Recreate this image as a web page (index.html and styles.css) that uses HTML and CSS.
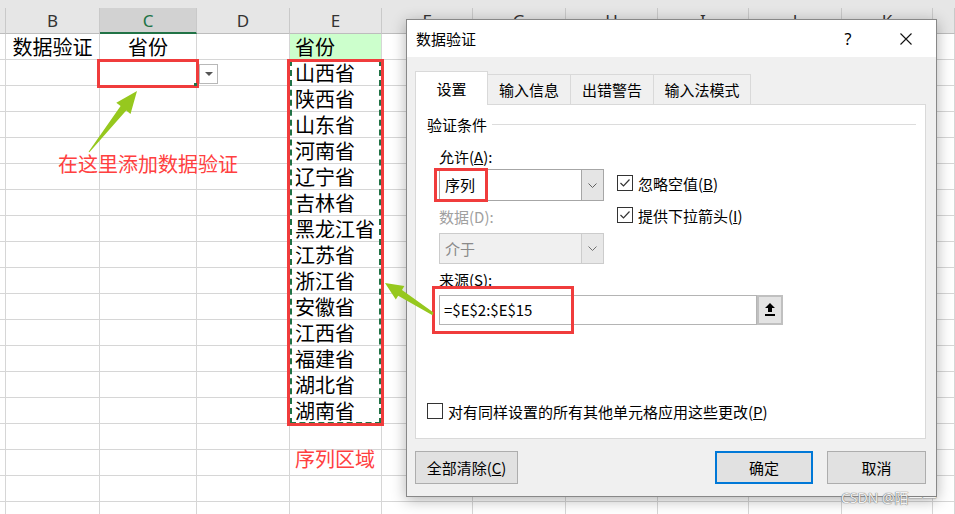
FILE: index.html
```html
<!DOCTYPE html>
<html lang="zh-CN">
<head>
    <meta charset="UTF-8">
    <title>数据验证</title>
    <link rel="stylesheet" href="styles.css">
</head>
<body>
    <div class="sheet">
        <div class="topbar"></div>
        <div class="row head"><span></span><span>B</span><span class="sel">C</span><span>D</span><span>E</span><span>F</span><span>G</span><span>H</span><span>I</span><span>J</span><span>K</span><span></span></div>
        <div class="row"><span></span><span class="c">数据验证</span><span class="c">省份</span><span></span><span class="e hl">省份</span><span></span><span></span><span></span><span></span><span></span><span></span><span></span></div>
        <div class="row"><span></span><span></span><span></span><span></span><span class="e">山西省</span><span></span><span></span><span></span><span></span><span></span><span></span><span></span></div>
        <div class="row"><span></span><span></span><span></span><span></span><span class="e">陕西省</span><span></span><span></span><span></span><span></span><span></span><span></span><span></span></div>
        <div class="row"><span></span><span></span><span></span><span></span><span class="e">山东省</span><span></span><span></span><span></span><span></span><span></span><span></span><span></span></div>
        <div class="row"><span></span><span></span><span></span><span></span><span class="e">河南省</span><span></span><span></span><span></span><span></span><span></span><span></span><span></span></div>
        <div class="row"><span></span><span></span><span></span><span></span><span class="e">辽宁省</span><span></span><span></span><span></span><span></span><span></span><span></span><span></span></div>
        <div class="row"><span></span><span></span><span></span><span></span><span class="e">吉林省</span><span></span><span></span><span></span><span></span><span></span><span></span><span></span></div>
        <div class="row"><span></span><span></span><span></span><span></span><span class="e">黑龙江省</span><span></span><span></span><span></span><span></span><span></span><span></span><span></span></div>
        <div class="row"><span></span><span></span><span></span><span></span><span class="e">江苏省</span><span></span><span></span><span></span><span></span><span></span><span></span><span></span></div>
        <div class="row"><span></span><span></span><span></span><span></span><span class="e">浙江省</span><span></span><span></span><span></span><span></span><span></span><span></span><span></span></div>
        <div class="row"><span></span><span></span><span></span><span></span><span class="e">安徽省</span><span></span><span></span><span></span><span></span><span></span><span></span><span></span></div>
        <div class="row"><span></span><span></span><span></span><span></span><span class="e">江西省</span><span></span><span></span><span></span><span></span><span></span><span></span><span></span></div>
        <div class="row"><span></span><span></span><span></span><span></span><span class="e">福建省</span><span></span><span></span><span></span><span></span><span></span><span></span><span></span></div>
        <div class="row"><span></span><span></span><span></span><span></span><span class="e">湖北省</span><span></span><span></span><span></span><span></span><span></span><span></span><span></span></div>
        <div class="row"><span></span><span></span><span></span><span></span><span class="e">湖南省</span><span></span><span></span><span></span><span></span><span></span><span></span><span></span></div>
        <div class="row"><span></span><span></span><span></span><span></span><span></span><span></span><span></span><span></span><span></span><span></span><span></span><span></span></div>
        <div class="row"><span></span><span></span><span></span><span></span><span class="e red">序列区域</span><span></span><span></span><span></span><span></span><span></span><span></span><span></span></div>
        <div class="row"><span></span><span></span><span></span><span></span><span></span><span></span><span></span><span></span><span></span><span></span><span></span><span></span></div>
        <div class="row"><span></span><span></span><span></span><span></span><span></span><span></span><span></span><span></span><span></span><span></span><span></span><span></span></div>
    </div>

    <!-- annotations on the sheet -->
    <div class="ants"></div>
    <div class="mark mark-c2"></div>
    <div class="mark mark-list"></div>
    <div class="handle"></div>
    <div class="dd"><i></i></div>
    <div class="note">在这里添加数据验证</div>

    <div class="dlg">
        <div class="dlg-title">
            <span>数据验证</span>
            <span class="help">?</span>
            <span class="close"><svg width="12" height="12" viewBox="0 0 12 12"><path d="M0.5 0.5L11.5 11.5M11.5 0.5L0.5 11.5" stroke="#111" stroke-width="1.1" fill="none"/></svg></span>
        </div>
        <div class="dlg-body">
            <div class="tabs">
                <div class="tab active">设置</div>
                <div class="tab t2">输入信息</div>
                <div class="tab t3">出错警告</div>
                <div class="tab t4">输入法模式</div>
            </div>
            <div class="panel">
                <div class="legend">验证条件</div>
                <div class="cond">
                    <div class="cols">
                        <div class="col-left">
                            <div class="lbl first">允许(<u>A</u>):</div>
                            <div class="combo">
                                <div class="val">序列</div>
                                <div class="arrow"><svg width="9" height="5" viewBox="0 0 9 5"><path d="M0.5 0.5L4.5 4.5L8.5 0.5" stroke="#606060" fill="none"/></svg></div>
                            </div>
                            <div class="lbl off">数据(D):</div>
                            <div class="combo disabled">
                                <div class="val">介于</div>
                                <div class="arrow"><svg width="9" height="5" viewBox="0 0 9 5"><path d="M0.5 0.5L4.5 4.5L8.5 0.5" stroke="#707070" fill="none"/></svg></div>
                            </div>
                        </div>
                        <div class="col-right">
                            <div class="check">
                                <svg width="16" height="16" viewBox="0 0 16 16"><rect x="0.5" y="0.5" width="15" height="15" fill="#fff" stroke="#333"/><path d="M3.5 8L6.5 11L12.5 4.5" stroke="#333" stroke-width="1.2" fill="none"/></svg>
                                <span>忽略空值(<u>B</u>)</span>
                            </div>
                            <div class="check">
                                <svg width="16" height="16" viewBox="0 0 16 16"><rect x="0.5" y="0.5" width="15" height="15" fill="#fff" stroke="#333"/><path d="M3.5 8L6.5 11L12.5 4.5" stroke="#333" stroke-width="1.2" fill="none"/></svg>
                                <span>提供下拉箭头(<u>I</u>)</span>
                            </div>
                        </div>
                    </div>
                    <div class="lbl">来源(<u>S</u>):</div>
                    <div class="source">
                        <div class="field">=$E$2:$E$15</div>
                        <div class="pick"><svg width="10" height="14" viewBox="0 0 10 14"><path d="M5 0L10 5H7V9H3V5H0Z" fill="#000"/><rect x="0" y="11" width="10" height="2" fill="#000"/></svg></div>
                    </div>
                </div>
                <div class="check apply">
                    <svg width="16" height="16" viewBox="0 0 16 16"><rect x="0.5" y="0.5" width="15" height="15" fill="#fff" stroke="#333"/></svg>
                    <span>对有同样设置的所有其他单元格应用这些更改(<u>P</u>)</span>
                </div>
            </div>
            <div class="actions">
                <div class="btn btn-clear">全部清除(<u>C</u>)</div>
                <div class="btn btn-ok">确定</div>
                <div class="btn btn-cancel">取消</div>
            </div>
        </div>
    </div>

    <!-- annotations over the dialog -->
    <div class="mark mark-allow"></div>
    <div class="mark mark-source"></div>
    <svg class="arrows" width="955" height="514" viewBox="0 0 955 514">
        <polygon points="89.4,152.3 126.2,110.5 130.5,113.9 137,91 116.3,102.7 120.6,106.1 88.6,151.7" fill="#96c81e"/>
        <polygon points="433.5,312.6 402,289.9 404.4,286.1 385,283 395.8,299.5 398.2,295.7 432.5,315.2" fill="#96c81e"/>
    </svg>
    <div class="wm">CSDN @陌一一</div>
</body>
</html>
```

FILE: styles.css
```css
body { margin: 0; width: 955px; height: 514px; overflow: hidden; position: relative; background: #fff; color: #000; font-family: "Noto Sans CJK SC", sans-serif; }

/* sheet */
.sheet { height: 514px; overflow: hidden; }
.topbar { height: 8px; background: #e6e6e6; }
.row { display: grid; grid-template-columns: 6px 94px 97px 93px 92px 91px 93px 92px 91px 93px 91px 1fr; height: 26px; }
.row span { box-sizing: border-box; border-right: 1px solid #d6d6d6; border-bottom: 1px solid #d6d6d6; font-size: 20px; line-height: 25px; white-space: nowrap; }
.head span { background: #e6e6e6; border-right-color: #c9c9c9; border-bottom-color: #bdbdbd; font-family: "Noto Sans", sans-serif; font-size: 17px; color: #333; text-align: center; overflow: hidden; }
.head .sel { background: #d2d2d2; color: #217346; border-bottom: 2px solid #217346; }
.row .c { text-align: center; }
.row .e { padding-left: 5px; }
.row .hl { background: #ccffcc; }
.row .red { color: #ff4040; line-height: 18px; }

/* annotations */
.mark { position: absolute; box-sizing: border-box; border: 3px solid #f03c3c; }
.mark-c2 { left: 97px; top: 59px; width: 102px; height: 29px; }
.mark-list { left: 287px; top: 59px; width: 97px; height: 367px; }
.mark-allow { left: 434px; top: 168px; width: 54px; height: 34px; }
.mark-source { left: 432px; top: 286px; width: 142px; height: 48px; }
.ants { position: absolute; left: 290px; top: 60px; width: 91px; height: 364px; box-sizing: border-box; border: 2px dashed #217346; }
.handle { position: absolute; left: 194px; top: 83px; width: 3px; height: 3px; background: #217346; }
.dd { position: absolute; left: 199px; top: 64px; width: 19px; height: 20px; box-sizing: border-box; border: 1px solid #b8b8b8; background: #fff; }
.dd i { position: absolute; left: 5px; top: 7px; border-left: 4px solid transparent; border-right: 4px solid transparent; border-top: 4px solid #555; }
.note { position: absolute; left: 58px; top: 152px; font-size: 20px; line-height: 24px; color: #ff4040; white-space: nowrap; }
.arrows { position: absolute; left: 0; top: 0; pointer-events: none; }
.wm { position: absolute; left: 841px; top: 489px; font-family: "Noto Sans", "Noto Sans CJK SC", sans-serif; font-size: 14px; line-height: 18px; color: #f2f2f2; text-shadow: 0 0 1px #6a6a6a, 0 0 1px #6a6a6a; white-space: nowrap; }

/* dialog */
.dlg { position: absolute; left: 406px; top: 19px; width: 531px; height: 478px; box-sizing: border-box; border: 1px solid #888; background: #f0f0f0; box-shadow: 0 3px 14px rgba(0, 0, 0, 0.3); font-size: 15px; }
.dlg-title { height: 37px; background: #fff; display: flex; align-items: center; padding-left: 9px; }
.help { margin-left: auto; width: 30px; margin-right: 20px; text-align: center; font-family: "Noto Sans", sans-serif; font-size: 16px; }
.close { width: 46px; margin-right: 7px; display: flex; justify-content: center; }
.dlg-body { padding: 14px 10px 12px 8px; }

.tabs { display: flex; align-items: flex-end; height: 33px; position: relative; z-index: 1; }
.tab { box-sizing: border-box; height: 30px; border: 1px solid #d9d9d9; border-bottom: none; border-left: none; display: flex; align-items: center; justify-content: center; }
.tab.active { width: 73px; height: 34px; margin-bottom: -1px; background: #fff; border-left: 1px solid #d9d9d9; }
.t2 { width: 83px; }
.t3 { width: 83px; }
.t4 { width: 97px; }

.panel { height: 335px; box-sizing: border-box; background: #fff; border: 1px solid #d9d9d9; padding: 9px 9px 0 11px; }
.legend { display: flex; align-items: center; height: 20px; }
.legend::after { content: ""; flex: 1; border-top: 1px solid #dcdcdc; margin-left: 5px; }
.cond { padding-left: 12px; }
.cols { display: flex; }
.col-left { width: 165px; }
.col-right { margin-left: 13px; padding-top: 41px; }
.lbl { height: 22px; line-height: 22px; margin-top: 5px; white-space: nowrap; }
.lbl.first { margin-top: 12px; }
.lbl.off { color: #a0a0a0; }
.combo { display: flex; height: 32px; margin-top: 1px; box-sizing: border-box; border: 1px solid #a6a6a6; background: #fff; }
.combo .val { flex: 1; padding-left: 5px; line-height: 30px; }
.combo .arrow { width: 21px; background: #e5e5e5; border-left: 1px solid #a6a6a6; display: flex; align-items: center; justify-content: center; }
.combo.disabled { height: 31px; margin-top: 5px; background: #f0f0f0; border-color: #cccccc; color: #8a8a8a; }
.combo.disabled .val { line-height: 29px; }
.combo.disabled .arrow { background: #e8e8e8; border-left-color: #cccccc; }
.check { display: flex; align-items: center; height: 16px; white-space: nowrap; }
.check svg { margin-right: 5px; flex: none; }
.check + .check { margin-top: 16px; }
.source { display: flex; width: 344px; height: 30px; margin-top: 4px; }
.field { flex: 1; box-sizing: border-box; border: 1px solid #b4b4b4; background: #fff; padding-left: 4px; line-height: 28px; }
.pick { width: 26px; box-sizing: border-box; border: 2px solid #c0c0c0; background: #e3e3e3; display: flex; align-items: center; justify-content: center; }
.apply { margin-top: 78px; }

.actions { display: flex; margin-top: 12px; }
.btn { height: 33px; box-sizing: border-box; border: 1px solid #adadad; background: #e1e1e1; display: flex; align-items: center; justify-content: center; }
.btn-clear { width: 103px; }
.btn-ok { width: 98px; margin-left: auto; border: 2px solid #0078d7; }
.btn-cancel { width: 99px; margin-left: 14px; }
```
